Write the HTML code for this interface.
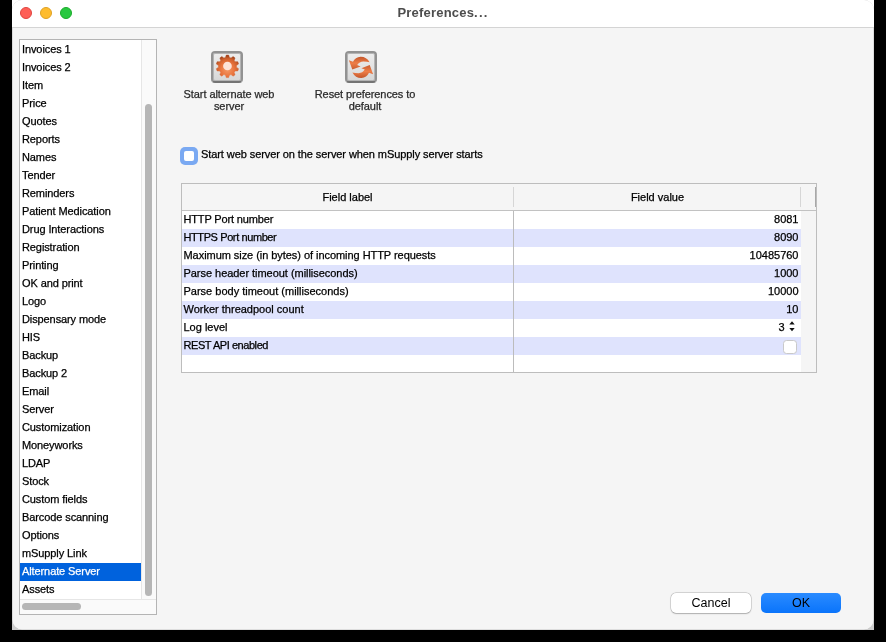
<!DOCTYPE html>
<html><head><meta charset="utf-8">
<style>
*{margin:0;padding:0;box-sizing:border-box}
html,body{width:886px;height:642px;background:#000;overflow:hidden;font-family:"Liberation Sans",sans-serif;}
.row,.trow,.thead,.tool,.cbl{-webkit-text-stroke:0.25px currentColor}
.frame{position:absolute;left:12px;top:0;width:862px;height:630px;background:linear-gradient(#fff 50%,#cdcdcd 50%)}
.win{will-change:transform;position:absolute;left:12px;top:0;width:862px;height:630px;background:#f5f5f5;border-radius:10px;overflow:hidden;box-shadow:inset 0 0 0 0.5px rgba(0,0,0,0.2)}
.titlebar{position:absolute;left:0;top:0;width:862px;height:28px;background:#fff;border-bottom:1px solid #d4d4d4}
.tl{position:absolute;top:7px;width:12px;height:12px;border-radius:50%}
.title{position:absolute;left:0;top:0;width:862px;text-align:center;font-weight:bold;font-size:13px;color:#4d4d4d;line-height:26px;letter-spacing:0.2px}
.abs{position:absolute}
.list{position:absolute;left:7px;top:39px;width:138px;height:576px;border:1px solid #b4b4b4;background:#fff}
.row{position:absolute;left:0;height:18px;font-size:11px;line-height:16px;letter-spacing:-0.1px;color:#000;padding-left:2px;white-space:nowrap;width:121px}
.sel{background:#0062dd;color:#fff}
.vtrack{position:absolute;left:121px;top:0;width:15px;height:559px;background:#fafafa;border-left:1px solid #e6e6e6}
.vthumb{position:absolute;left:3px;top:64px;width:7px;height:492px;background:#b6b6b6;border-radius:4px}
.htrack{position:absolute;left:0;top:559px;width:136px;height:15px;background:#fafafa;border-top:1px solid #e6e6e6}
.hthumb{position:absolute;left:2px;top:3px;width:59px;height:7px;background:#b6b6b6;border-radius:4px}
.tool{position:absolute;font-size:11px;line-height:12px;color:#2a2a2a;letter-spacing:-0.08px;text-align:center}
.ibox{position:absolute;width:32px;height:32px;border:2px solid #929292;border-bottom-color:#747474;border-radius:4px;box-shadow:inset 0 0 0 1px #b4b4b4;background:linear-gradient(#ededed,#e2e2e2 55%,#d6d6d6)}
.table{position:absolute;left:169px;top:183px;width:636px;height:190px;border:1px solid #bdbdbd;background:#f5f5f5}
.thead{position:absolute;left:0;top:0;width:634px;height:27px;border-bottom:1px solid #c2c2c2;background:#f5f5f5;font-size:11px;line-height:26px;color:#000}
.trow{position:absolute;left:0;width:619px;height:18px;font-size:11px;line-height:16px;background:#fff}
.trow.alt{background:#dfe3fd}
.c1{position:absolute;left:1.5px;top:0;white-space:nowrap}
.c2{position:absolute;right:2.5px;top:0;white-space:nowrap}
.btn{position:absolute;height:21px;border-radius:5px;font-size:13px;line-height:21px;text-align:center;color:#000}
</style></head><body>
<div class="frame"></div>
<div class="win">
  <div class="titlebar">
    <div class="tl" style="left:8px;background:#fe5f57;border:0.8px solid #e0443e"></div>
    <div class="tl" style="left:28px;background:#febc2e;border:0.8px solid #dea123"></div>
    <div class="tl" style="left:48px;background:#28c840;border:0.8px solid #1aab29"></div>
    <div class="title">Preferences<span style="letter-spacing:1.2px">...</span></div>
  </div>

  <div class="list">
    <div class="row" style="top:1px">Invoices 1</div>
    <div class="row" style="top:19px">Invoices 2</div>
    <div class="row" style="top:37px">Item</div>
    <div class="row" style="top:55px">Price</div>
    <div class="row" style="top:73px">Quotes</div>
    <div class="row" style="top:91px">Reports</div>
    <div class="row" style="top:109px">Names</div>
    <div class="row" style="top:127px">Tender</div>
    <div class="row" style="top:145px">Reminders</div>
    <div class="row" style="top:163px">Patient Medication</div>
    <div class="row" style="top:181px">Drug Interactions</div>
    <div class="row" style="top:199px">Registration</div>
    <div class="row" style="top:217px">Printing</div>
    <div class="row" style="top:235px">OK and print</div>
    <div class="row" style="top:253px">Logo</div>
    <div class="row" style="top:271px">Dispensary mode</div>
    <div class="row" style="top:289px">HIS</div>
    <div class="row" style="top:307px">Backup</div>
    <div class="row" style="top:325px">Backup 2</div>
    <div class="row" style="top:343px">Email</div>
    <div class="row" style="top:361px">Server</div>
    <div class="row" style="top:379px">Customization</div>
    <div class="row" style="top:397px">Moneyworks</div>
    <div class="row" style="top:415px">LDAP</div>
    <div class="row" style="top:433px">Stock</div>
    <div class="row" style="top:451px">Custom fields</div>
    <div class="row" style="top:469px">Barcode scanning</div>
    <div class="row" style="top:487px">Options</div>
    <div class="row" style="top:505px">mSupply Link</div>
    <div class="row sel" style="top:523px">Alternate Server</div>
    <div class="row" style="top:541px">Assets</div>
    <div class="vtrack"><div class="vthumb"></div></div>
    <div class="htrack"><div class="hthumb"></div></div>
  </div>

  <!-- toolbar -->
  <div class="ibox" style="left:199px;top:51px"></div>
  <svg class="abs" style="left:199px;top:51px" width="32" height="32" viewBox="0 0 32 32"><defs><radialGradient id="gg" cx="16.45" cy="18.5" r="13.5" gradientUnits="userSpaceOnUse"><stop offset="0" stop-color="#f59a66"/><stop offset="0.5" stop-color="#ea7640"/><stop offset="0.8" stop-color="#d0612e"/><stop offset="1" stop-color="#a4441c"/></radialGradient></defs>
<path fill="url(#gg)" stroke="url(#gg)" stroke-width="0.5" stroke-linejoin="round" d="M14.50 6.56 L15.27 4.11 L17.63 4.11 L18.40 6.56 A9.0 9.0 0 0 1 20.04 7.10 L20.04 7.10 L22.10 5.56 L24.01 6.95 L23.19 9.39 A9.0 9.0 0 0 1 24.20 10.78 L24.20 10.78 L26.77 10.75 L27.50 13.00 L25.41 14.49 A9.0 9.0 0 0 1 25.41 16.21 L25.41 16.21 L27.50 17.70 L26.77 19.95 L24.20 19.92 A9.0 9.0 0 0 1 23.19 21.31 L23.19 21.31 L24.01 23.75 L22.10 25.14 L20.04 23.60 A9.0 9.0 0 0 1 18.40 24.14 L18.40 24.14 L17.63 26.59 L15.27 26.59 L14.50 24.14 A9.0 9.0 0 0 1 12.86 23.60 L12.86 23.60 L10.80 25.14 L8.89 23.75 L9.71 21.31 A9.0 9.0 0 0 1 8.70 19.92 L8.70 19.92 L6.13 19.95 L5.40 17.70 L7.49 16.21 A9.0 9.0 0 0 1 7.49 14.49 L7.49 14.49 L5.40 13.00 L6.13 10.75 L8.70 10.78 A9.0 9.0 0 0 1 9.71 9.39 L9.71 9.39 L8.89 6.95 L10.80 5.56 L12.86 7.10 A9.0 9.0 0 0 1 14.50 6.56 Z"/>
<circle cx="16.45" cy="15" r="4.35" fill="#fde3d8"/></svg>
  <div class="tool" style="left:162px;top:88px;width:110px">Start alternate web<br>server</div>
  <div class="ibox" style="left:333px;top:51px"></div>
  <svg class="abs" style="left:333px;top:51px" width="32" height="32" viewBox="0 0 32 32"><defs><linearGradient id="rg" x1="0" y1="0" x2="0" y2="1"><stop offset="0" stop-color="#c4562a"/><stop offset="0.5" stop-color="#ee7e48"/><stop offset="1" stop-color="#c85c30"/></linearGradient></defs>
<g fill="url(#rg)"><path d="M24.6 11.2 Q21.5 5.6 15.6 5.7 Q10.2 6 8 10.8 L3.9 9.3 L7.3 18.6 L15.6 15.4 L12.2 14 Q14.4 10.5 18.4 10.4 Q22 10.5 24.6 11.2Z"/>
<path transform="rotate(180 16 16.3)" d="M24.6 11.2 Q21.5 5.6 15.6 5.7 Q10.2 6 8 10.8 L3.9 9.3 L7.3 18.6 L15.6 15.4 L12.2 14 Q14.4 10.5 18.4 10.4 Q22 10.5 24.6 11.2Z"/></g></svg>
  <div class="tool" style="left:293px;top:88px;width:120px">Reset preferences to<br>default</div>

  <!-- checkbox -->
  <div class="abs" style="left:168px;top:147px;width:18px;height:18px;border-radius:5px;background:#7aa9f2"></div>
  <div class="abs" style="left:172px;top:151px;width:10px;height:10px;border-radius:2px;background:#fff"></div>
  <div class="abs cbl" style="left:189px;top:146px;letter-spacing:-0.08px;font-size:11px;line-height:16px;white-space:nowrap;color:#000">Start web server on the server when mSupply server starts</div>

  <!-- table -->
  <div class="table">
    <div class="thead">
      <div class="abs" style="left:0;width:331px;text-align:center">Field label</div>
      <div class="abs" style="left:331px;top:3px;width:1px;height:20px;background:#d6d6d6"></div>
      <div class="abs" style="left:332px;width:287px;text-align:center">Field value</div>
      <div class="abs" style="left:618px;top:3px;width:1px;height:20px;background:#d6d6d6"></div>
      <div class="abs" style="left:633px;top:3px;width:1px;height:20px;background:#a8a8a8"></div>
    </div>
    <div class="trow" style="top:27px"><span class="c1" style="letter-spacing:-0.15px">HTTP Port number</span><span class="c2">8081</span></div>
    <div class="trow alt" style="top:45px"><span class="c1" style="letter-spacing:-0.4px">HTTPS Port number</span><span class="c2">8090</span></div>
    <div class="trow" style="top:63px"><span class="c1" style="letter-spacing:-0.05px">Maximum size (in bytes) of incoming HTTP requests</span><span class="c2">10485760</span></div>
    <div class="trow alt" style="top:81px"><span class="c1" style="letter-spacing:-0.04px">Parse header timeout (milliseconds)</span><span class="c2">1000</span></div>
    <div class="trow" style="top:99px"><span class="c1">Parse body timeout (milliseconds)</span><span class="c2">10000</span></div>
    <div class="trow alt" style="top:117px"><span class="c1">Worker threadpool count</span><span class="c2">10</span></div>
    <div class="trow" style="top:135px"><span class="c1">Log level</span><span class="c2" style="right:16.5px">3</span><svg class="abs" style="left:607px;top:2px" width="6" height="11" viewBox="0 0 6 11"><path d="M0.3 3.6 L3 0.3 L5.7 3.6Z M0.3 7 L3 10.3 L5.7 7Z" fill="#111"/></svg></div>
    <div class="trow alt" style="top:153px"><span class="c1" style="letter-spacing:-0.44px">REST API enabled</span><div class="abs" style="left:601px;top:3px;width:14px;height:14px;border-radius:3.5px;background:#fff;border:1px solid #c9c9c9"></div></div>
    <div class="trow" style="top:171px;height:17px"></div>
    <div class="abs" style="left:331px;top:27px;width:1px;height:161px;background:#bcbcbc"></div>
  </div>

  <!-- buttons -->
  <div class="btn" style="left:659px;top:593px;width:80px;height:20px;line-height:20px;font-size:12.5px;background:#fff;box-shadow:0 0 0 0.5px rgba(0,0,0,0.22),0 0.5px 1.5px rgba(0,0,0,0.2)">Cancel</div>
  <div class="btn" style="left:749px;top:593px;width:80px;height:20px;line-height:20px;font-size:12.5px;background:linear-gradient(#2a8bff,#0a74fb)">OK</div>
</div>
</body></html>
